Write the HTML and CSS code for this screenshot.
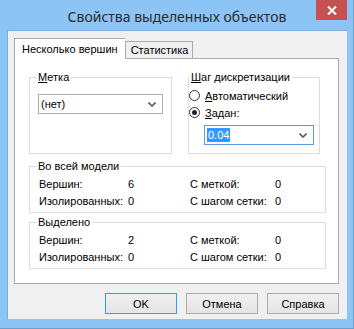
FILE: index.html
```html
<!DOCTYPE html>
<html lang="ru">
<head>
    <meta charset="UTF-8">
    <title>Свойства выделенных объектов</title>
    <link rel="stylesheet" href="styles.css">
</head>
<body>
    <div class="window">
        <!-- Title bar -->
        <div class="titlebar">
            <span class="title">Свойства выделенных объектов</span>
            <div class="close">
                <svg width="10" height="9" viewBox="0 0 10 9">
                    <path d="M1 0.5 L9 8.5 M9 0.5 L1 8.5" stroke="#fff" stroke-width="2"/>
                </svg>
            </div>
        </div>

        <div class="client">
            <!-- Tabs -->
            <div class="tabs">
                <div class="tab active">Несколько вершин</div>
                <div class="tab">Статистика</div>
            </div>

            <div class="panel">
                <div class="top-row">
                    <fieldset class="group group-mark">
                        <legend><u>М</u>етка</legend>
                        <div class="group-body">
                            <div class="combo">
                                <span>(нет)</span>
                                <svg class="chevron" width="8" height="5" viewBox="0 0 8 5"><path d="M0.5 0.5 L4 4 L7.5 0.5" fill="none" stroke="#5a5a5a" stroke-width="1.6"/></svg>
                            </div>
                        </div>
                    </fieldset>

                    <fieldset class="group group-step">
                        <legend><u>Ш</u>аг дискретизации</legend>
                        <div class="group-body">
                            <div class="radio"><span class="circle"></span><span><u>А</u>втоматический</span></div>
                            <div class="radio"><span class="circle checked"></span><span><u>З</u>адан:</span></div>
                            <div class="combo focused">
                                <span class="selected">0.04</span>
                                <svg class="chevron" width="8" height="5" viewBox="0 0 8 5"><path d="M0.5 0.5 L4 4 L7.5 0.5" fill="none" stroke="#5a5a5a" stroke-width="1.6"/></svg>
                            </div>
                        </div>
                    </fieldset>
                </div>

                <fieldset class="group stats">
                    <legend>Во всей модели</legend>
                    <div class="group-body stat-grid">
                        <span>Вершин:</span><span>6</span><span>С меткой:</span><span>0</span>
                        <span>Изолированных:</span><span>0</span><span>С шагом сетки:</span><span>0</span>
                    </div>
                </fieldset>

                <fieldset class="group stats second">
                    <legend>Выделено</legend>
                    <div class="group-body stat-grid">
                        <span>Вершин:</span><span>2</span><span>С меткой:</span><span>0</span>
                        <span>Изолированных:</span><span>0</span><span>С шагом сетки:</span><span>0</span>
                    </div>
                </fieldset>
            </div>

            <!-- Dialog buttons -->
            <div class="buttons">
                <button class="btn default">OK</button>
                <button class="btn">Отмена</button>
                <button class="btn">Справка</button>
            </div>
        </div>
    </div>
</body>
</html>
```

FILE: styles.css
```css
body {
    margin: 0;
    font-family: "Liberation Sans", Arial, sans-serif;
    font-size: 11px;
    color: #000;
}
.window {
    width: 354px;
    height: 329px;
    box-sizing: border-box;
    background-color: #8cc4f5;
    border-right: 1px solid #6d9fcc;
    border-bottom: 1px solid #6d9fcc;
    padding: 0 6px 9px 7px;
    display: flex;
    flex-direction: column;
}
.titlebar {
    height: 30px;
    position: relative;
    display: flex;
    align-items: center;
    justify-content: center;
}
.title {
    font-family: "Noto Sans", sans-serif;
    font-size: 14px;
    color: #2b2b2b;
    margin-top: 3px;
}
.close {
    position: absolute;
    top: 0;
    right: 0;
    width: 31px;
    height: 20px;
    background-color: #c75050;
    display: flex;
    align-items: center;
    justify-content: center;
}
.client {
    flex: 1;
    background-color: #f0f0f0;
    border: 1px solid #7aaee0;
    border-bottom: none;
    border-right: none;
    padding: 7px 8px 0 6px;
    display: flex;
    flex-direction: column;
}

/* Tabs */
.tabs {
    display: flex;
    align-items: flex-end;
    height: 20px;
    position: relative;
    z-index: 1;
}
.tab {
    height: 16px;
    line-height: 17px;
    padding: 0 4px 0 5px;
    border: 1px solid #acacac;
    border-bottom: none;
    background-color: #f0f0f0;
}
.tab.active {
    height: 20px;
    line-height: 20px;
    padding: 0 7px;
    background-color: #fff;
    margin-bottom: -1px;
    border-right: none;
}
.panel {
    background-color: #fff;
    border: 1px solid #acacac;
    height: 226px;
    box-sizing: border-box;
    padding: 11px 12px 0 14px;
}

/* Group boxes */
.group {
    margin: 0;
    padding: 0;
    border: 1px solid #dcdcdc;
    min-width: 0;
    box-sizing: border-box;
}
.group legend {
    margin-left: 6px;
    padding: 0 2px;
    line-height: 14px;
}
.top-row {
    display: flex;
    gap: 16px;
    width: 291px;
}
.group-mark {
    width: 143px;
    height: 84px;
}
.group-mark .group-body {
    padding: 10px 8px 0 8px;
}
.group-step {
    width: 132px;
    height: 84px;
}
.group-step legend {
    margin-left: 0;
}
.group-step .group-body {
    padding: 3px 5px 0 0;
}

/* Combo boxes */
.combo {
    height: 20px;
    box-sizing: border-box;
    border: 1px solid #acacac;
    background-color: #fff;
    display: flex;
    align-items: center;
    justify-content: space-between;
    padding: 0 6px 0 2px;
}
.combo.focused {
    border-color: #569de5;
    margin: 4px 0 0 15px;
}
.combo .selected {
    background-color: #3399ff;
    color: #fff;
    padding: 0 1px;
    line-height: 14px;
}

/* Radio buttons */
.radio {
    display: flex;
    align-items: center;
    gap: 5px;
    height: 17px;
}
.circle {
    width: 11px;
    height: 11px;
    border: 1px solid #333;
    border-radius: 50%;
    background-color: #fff;
    box-sizing: border-box;
    display: flex;
    align-items: center;
    justify-content: center;
}
.circle.checked::after {
    content: "";
    width: 5px;
    height: 5px;
    border-radius: 50%;
    background-color: #222;
}

/* Statistics */
.stats {
    width: 297px;
    margin-top: 5px;
}
.stats.second {
    margin-top: 2px;
}
.stat-grid {
    display: grid;
    grid-template-columns: 89px 62px 85px auto;
    grid-auto-rows: 17px;
    align-items: center;
    padding: 2px 0 3px 9px;
}

/* Buttons */
.buttons {
    display: flex;
    justify-content: flex-end;
    gap: 9px;
    margin-top: 9px;
}
.btn {
    width: 72px;
    height: 21px;
    border: 1px solid #acacac;
    background: linear-gradient(#f0f0f0, #e5e5e5);
    font-family: "Liberation Sans", Arial, sans-serif;
    font-size: 11px;
    color: #000;
    padding: 0;
}
.btn.default {
    border-color: #3399ff;
}
```
